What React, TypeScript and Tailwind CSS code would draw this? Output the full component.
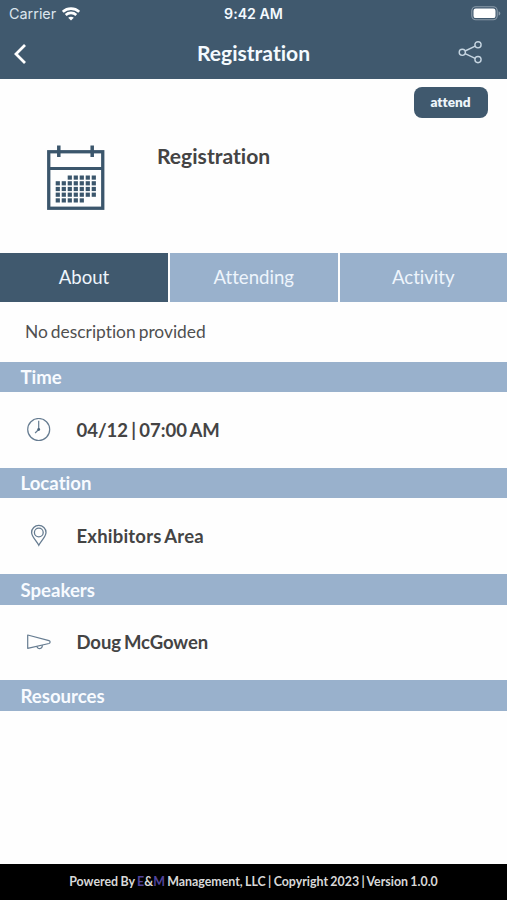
import React from "react";

const dotRows = [
  [2, 3, 4, 5, 6],
  [0, 1, 2, 3, 4, 5, 6],
  [0, 1, 2, 3, 4, 5, 6],
  [0, 1, 2, 3, 4, 5, 6],
  [0, 1, 2, 3, 4],
];

function CalendarIcon() {
  return (
    <svg width="58" height="66" viewBox="0 0 58 66" fill="none" stroke="#3b566c">
      <rect x="1.75" y="6.75" width="54" height="56.5" strokeWidth="3.3" />
      <path d="M1 23.5H57" strokeWidth="2.8" />
      <path d="M11.8 0.5V12M45.2 0.5V12" strokeWidth="3.5" />
      <g fill="#3b566c" stroke="none">
        {dotRows.map((row, r) =>
          row.map((c) => <rect key={`${r}-${c}`} x={8.7 + c * 6} y={30.5 + r * 5.7} width="4.2" height="4.2" />),
        )}
      </g>
    </svg>
  );
}

function WifiIcon() {
  return (
    <svg width="18" height="14" viewBox="0 0 18 14" fill="none" stroke="#fff" strokeWidth="2.6">
      <path d="M0.8 4.8C5.4 0.5 12.6 0.5 17.2 4.8" />
      <path d="M3.7 8C6.7 5.2 11.3 5.2 14.3 8" />
      <path d="M9 13.6L6.2 10.7C7.8 9.3 10.2 9.3 11.8 10.7Z" fill="#fff" stroke="none" />
    </svg>
  );
}

function BatteryIcon() {
  return (
    <svg width="30" height="15" viewBox="0 0 30 15" fill="none">
      <rect x="0.8" y="0.8" width="25.4" height="13" rx="4" stroke="#8b9cab" strokeWidth="1.1" />
      <rect x="2.5" y="2.5" width="22" height="9.6" rx="2.2" fill="#fff" />
      <path d="M27.6 5.2C29.9 6 29.9 8.7 27.6 9.5Z" fill="#8b9cab" />
    </svg>
  );
}

function ShareIcon() {
  return (
    <svg width="24" height="24" viewBox="0 0 24 24" fill="none" stroke="#c6d5e1" strokeWidth="1.4">
      <circle cx="4.3" cy="11.3" r="3.1" />
      <circle cx="20" cy="3.8" r="3.1" />
      <circle cx="20" cy="18.6" r="3.1" />
      <path d="M7.1 10L17.2 5.2M7.1 12.6L17.2 17.3" />
    </svg>
  );
}

function ClockIcon() {
  return (
    <svg width="24" height="24" viewBox="0 0 24 24" fill="none" stroke="#667c91">
      <circle cx="11.7" cy="11.5" r="11" strokeWidth="1.2" />
      <path d="M11.7 2.8V11.5L8.1 15" strokeWidth="1.2" />
      <circle cx="11.7" cy="11.5" r="1.4" fill="#4c657b" stroke="none" />
    </svg>
  );
}

function PinIcon() {
  return (
    <svg width="24" height="24" viewBox="0 0 24 24" fill="none" stroke="#667c91" strokeWidth="1.3">
      <path d="M11.8 21.3C9.3 16.8 4.6 12.5 4.6 8.5C4.6 4.5 7.8 1.4 11.8 1.4S19 4.5 19 8.5C19 12.5 14.3 16.8 11.8 21.3Z" />
      <circle cx="11.8" cy="8.5" r="4.4" />
    </svg>
  );
}

function MegaphoneIcon() {
  return (
    <svg width="24" height="24" viewBox="0 0 24 24" fill="none" stroke="#667c91" strokeWidth="1.2" strokeLinejoin="round">
      <path d="M0.7 5L22 10.6C23.5 11 23.5 13.1 22 13.5L0.7 18.3Z" />
      <path d="M9.8 16.4C10.2 18.1 11.8 18.9 13.3 18.5C14.8 18.1 15.5 16.9 15.2 15.2" />
    </svg>
  );
}

function SectionBar({ children }: { children: React.ReactNode }) {
  return (
    <h2 className="flex h-[30.5px] items-center bg-[#99b1cc] pt-px pl-[20.5px] text-[18.6px] leading-none font-bold text-[#f8fbff]">
      {children}
    </h2>
  );
}

function DetailRow({ icon, className = "", children }: { icon: React.ReactNode; className?: string; children: React.ReactNode }) {
  return (
    <div className="flex h-[75.8px] items-center gap-[26px] pl-[26.5px] text-[18.5px] leading-none font-bold text-[#444] [word-spacing:-1.3px]">
      {icon}
      <span className={className}>{children}</span>
    </div>
  );
}

export default function App() {
  return (
    <div className="flex h-[900px] w-[507px] flex-col overflow-hidden bg-[#fefefe] font-['Lato',sans-serif] whitespace-nowrap [font-variant-ligatures:none]">
      <header className="h-[79px] shrink-0 bg-[#40596e] text-[#f4faff]">
        <div className="grid h-[27px] grid-cols-3 items-center font-['Inter',sans-serif] leading-none">
          <div className="flex items-center gap-[6px] pt-px pl-[9px] text-[14.4px] text-[#dbe5ed]">
            <span>Carrier</span>
            <span className="-mt-px"><WifiIcon /></span>
          </div>
          <span className="pt-px text-center text-[14.2px] font-semibold">9:42 AM</span>
          <div className="flex justify-end pr-[6px]"><BatteryIcon /></div>
        </div>
        <div className="grid h-[52px] grid-cols-3 items-center">
          <button className="pt-[2px] pl-[13px]" aria-label="Back">
            <svg width="14" height="22" viewBox="0 0 14 22" fill="none" stroke="#fff" strokeWidth="2.8">
              <path d="M12 2L3 11L12 20" />
            </svg>
          </button>
          <h1 className="text-center text-[21.1px] leading-none font-bold">Registration</h1>
          <button className="flex justify-end pr-[25px]" aria-label="Share"><ShareIcon /></button>
        </div>
      </header>

      <section className="flex h-[173.5px] shrink-0">
        <div className="pt-[66px] pl-[47px]"><CalendarIcon /></div>
        <h2 className="pt-[66px] pl-[52px] text-[21.1px] leading-[22px] font-bold text-[#444]">Registration</h2>
        <button className="mt-[8px] mr-[19.5px] ml-auto h-[31px] w-[74px] rounded-[8px] bg-[#40596e] text-[13.6px] leading-none font-extrabold text-[#edf5fb]">
          attend
        </button>
      </section>

      <nav className="grid h-[49px] shrink-0 grid-cols-[168px_167.5px_1fr] gap-[2px] text-[18.6px] leading-none text-[#eef5fc]">
        <button className="bg-[#40596e]">About</button>
        <button className="bg-[#99b1cc]">Attending</button>
        <button className="bg-[#99b1cc]">Activity</button>
      </nav>

      <main className="flex-1">
        <p className="flex h-[60px] items-center pt-px pl-[25px] text-[17.4px] leading-none text-[#505050] [word-spacing:-1.5px]">No description provided</p>
        <SectionBar>Time</SectionBar>
        <DetailRow icon={<ClockIcon />}>04/12 | 07:00 AM</DetailRow>
        <SectionBar>Location</SectionBar>
        <DetailRow icon={<PinIcon />} className="tracking-[0.2px]">Exhibitors Area</DetailRow>
        <SectionBar>Speakers</SectionBar>
        <DetailRow icon={<MegaphoneIcon />} className="tracking-[-0.1px]">Doug McGowen</DetailRow>
        <SectionBar>Resources</SectionBar>
      </main>

      <footer className="flex h-[36.5px] shrink-0 items-center justify-center bg-black text-[12.4px] leading-none font-bold text-[#d8d8d8] [word-spacing:-0.7px]">
        <span>
          Powered By <span className="text-[#51439b]">E</span>&amp;<span className="text-[#51439b]">M</span> Management, LLC | Copyright 2023 | Version 1.0.0
        </span>
      </footer>
    </div>
  );
}
